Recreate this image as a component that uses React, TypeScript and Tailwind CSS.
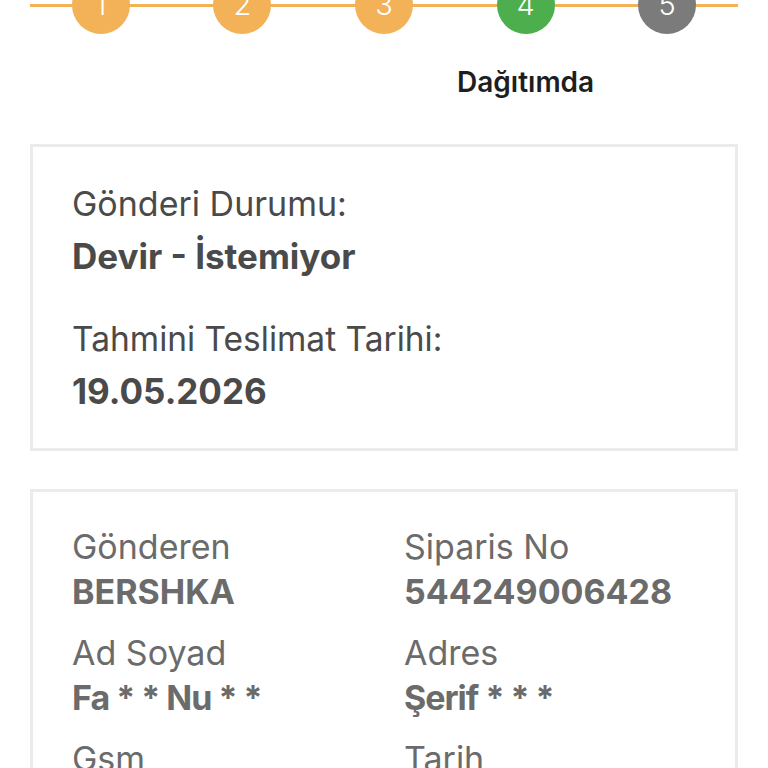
import React from "react";

const steps = [
  { n: "1", c: "bg-[#f3b257]" },
  { n: "2", c: "bg-[#f3b257]" },
  { n: "3", c: "bg-[#f3b257]" },
  { n: "4", c: "bg-[#4cae4c]" },
  { n: "5", c: "bg-[#7b7b7b]" },
];

export default function App() {
  return (
    <div
      className="w-[768px] h-[768px] overflow-hidden bg-white"
      style={{ fontFamily: "Inter, 'Noto Sans', sans-serif" }}
    >
      <div className="relative mx-[30px] mt-[-24px]">
        <div className="absolute left-0 right-0 top-[28px] h-[3px] bg-[#f3b257]" />
        <div className="relative grid grid-cols-5">
          {steps.map((s) => (
            <div key={s.n} className="flex justify-center">
              <div
                className={`w-[58px] h-[58px] rounded-full ${s.c} flex items-center justify-center text-white text-[29px] font-light`}
              >
                {s.n}
              </div>
            </div>
          ))}
          <div />
          <div />
          <div />
          <div className="flex justify-center pt-[30px]">
            <span className="text-[28px] font-semibold text-[#1e1e1e] leading-[36px] whitespace-nowrap">
              Dağıtımda
            </span>
          </div>
          <div />
        </div>
      </div>

      <div className="mx-[30px] mt-[44px] border-[3px] border-[#ebebeb] px-[39px] py-[31px] text-[#4a4a4a]">
        <div className="text-[34px] leading-[52px]">Gönderi Durumu:</div>
        <div className="text-[35px] leading-[52px] font-bold">Devir - İstemiyor</div>
        <div className="mt-[31px] text-[33.5px] leading-[52px]">Tahmini Teslimat Tarihi:</div>
        <div className="text-[35px] leading-[52px] font-bold">19.05.2026</div>
      </div>

      <div className="mx-[30px] mt-[38px] border-[3px] border-[#ebebeb] px-[39px] pt-[32px] text-[#6b6b6b]">
        <div className="grid grid-cols-2 gap-y-[16px]">
          <div>
            <div className="text-[34px] leading-[45px]">Gönderen</div>
            <div className="text-[34px] leading-[45px] font-bold">BERSHKA</div>
          </div>
          <div className="pl-[20px]">
            <div className="text-[34px] leading-[45px]">Siparis No</div>
            <div className="text-[34px] leading-[45px] font-bold">544249006428</div>
          </div>
          <div>
            <div className="text-[34px] leading-[45px]">Ad Soyad</div>
            <div className="text-[34px] leading-[45px] font-bold tracking-[-1px]">Fa * * Nu * *</div>
          </div>
          <div className="pl-[20px]">
            <div className="text-[34px] leading-[45px]">Adres</div>
            <div className="text-[34px] leading-[45px] font-bold tracking-[-1px]">Şerif * * *</div>
          </div>
          <div>
            <div className="text-[34px] leading-[45px]">Gsm</div>
            <div className="text-[34px] leading-[45px] font-bold">0 5** *** ** **</div>
          </div>
          <div className="pl-[20px]">
            <div className="text-[34px] leading-[45px]">Tarih</div>
            <div className="text-[34px] leading-[45px] font-bold">15.05.2026</div>
          </div>
        </div>
      </div>
    </div>
  );
}
